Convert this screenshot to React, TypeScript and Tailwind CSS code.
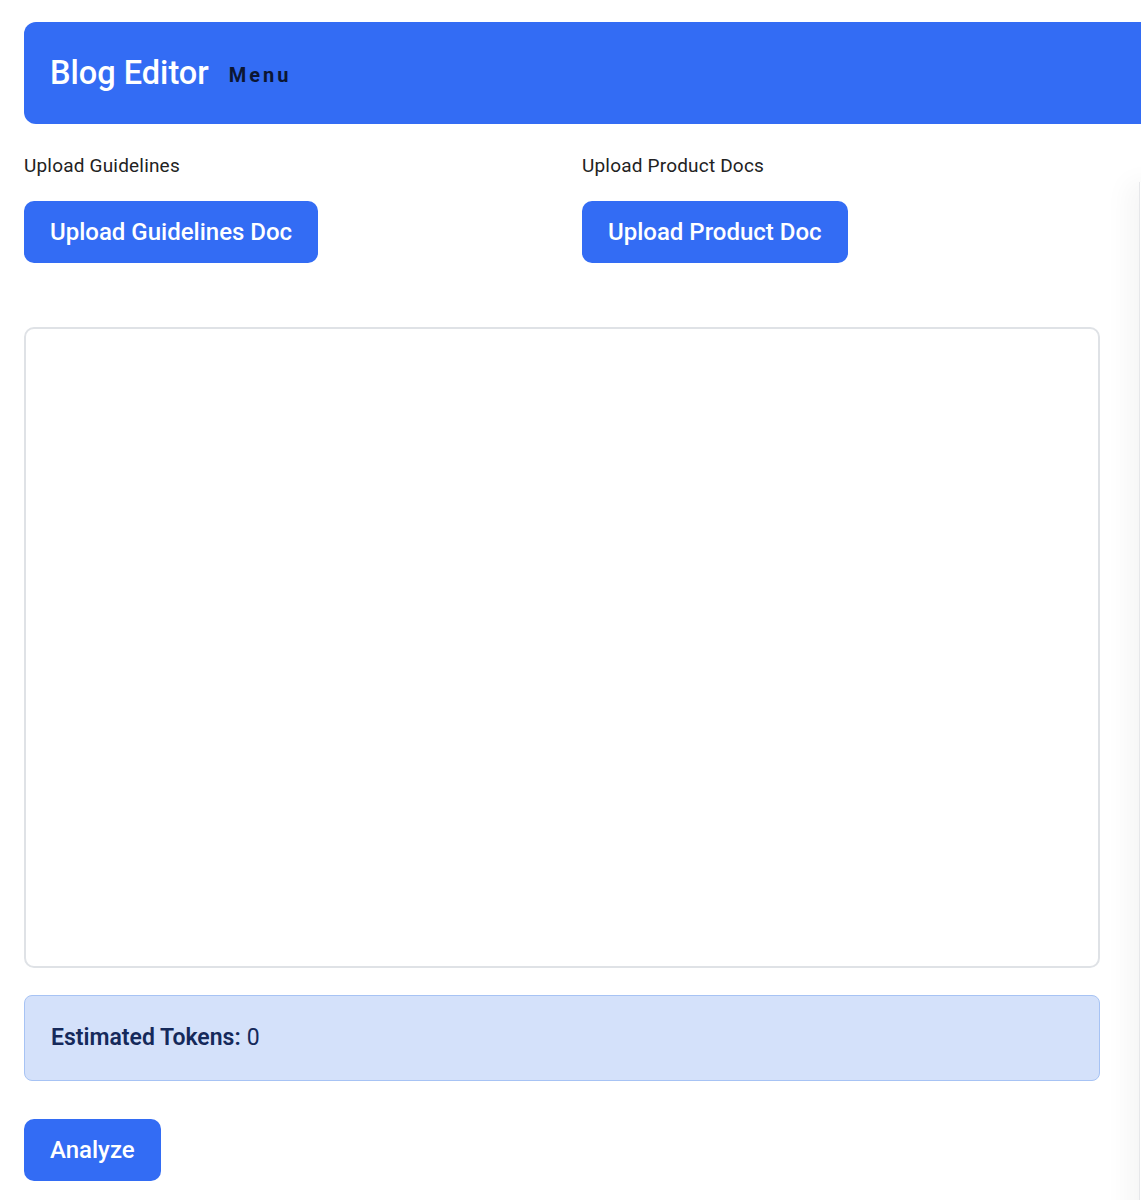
import React from 'react';

const App: React.FC = () => {
  return (
    <div
      className="relative w-[1141px] min-h-[1200px] overflow-hidden bg-white"
      style={{ fontFamily: 'Roboto, "Liberation Sans", sans-serif' }}
    >
      <div className="pl-6 pt-[22px]">
        <header className="flex h-[102px] w-[1200px] items-center gap-5 rounded-l-xl bg-[#336cf4] pl-[26px]">
          <h1 className="text-[32.5px] font-medium text-white">Blog Editor</h1>
          <span className="pt-1 text-[20px] font-bold tracking-[0.15em] text-[#0c1633]">Menu</span>
        </header>
      </div>

      <main className="w-[1100px] pl-6">
        <div className="mt-[29px] grid grid-cols-2 gap-10">
          <div>
            <p className="text-[19px] leading-[26px] tracking-[0.01em] text-[#222]">Upload Guidelines</p>
            <button className="mt-[22px] h-[62px] rounded-[10px] bg-[#336cf4] px-[26px] text-[24px] font-medium text-white">
              Upload Guidelines Doc
            </button>
          </div>
          <div>
            <p className="text-[19px] leading-[26px] tracking-[0.01em] text-[#222]">Upload Product Docs</p>
            <button className="mt-[22px] h-[62px] rounded-[10px] bg-[#336cf4] px-[26px] text-[24px] font-medium text-white">
              Upload Product Doc
            </button>
          </div>
        </div>

        <textarea className="mt-[64px] block h-[641px] w-full resize-none rounded-[10px] border-2 border-[#dfe2e6] bg-white p-3 outline-none" />

        <div className="mt-[27px] flex h-[86px] items-center rounded-lg border border-[#a7c3f4] bg-[#d4e1fa] px-[26px] text-[23px] text-[#15295a]">
          <span className="font-semibold">Estimated Tokens:</span>
          <span className="ml-[6px]">0</span>
        </div>

        <button className="mt-[38px] h-[62px] rounded-[10px] bg-[#336cf4] px-[26px] text-[24px] font-medium text-white">
          Analyze
        </button>
      </main>

      <div className="absolute left-[1139px] top-[182px] h-[1100px] w-[300px] border-l border-[#e6e7ea] bg-white shadow-[-12px_0_24px_rgba(0,0,0,0.04)]" />
    </div>
  );
};

export default App;
